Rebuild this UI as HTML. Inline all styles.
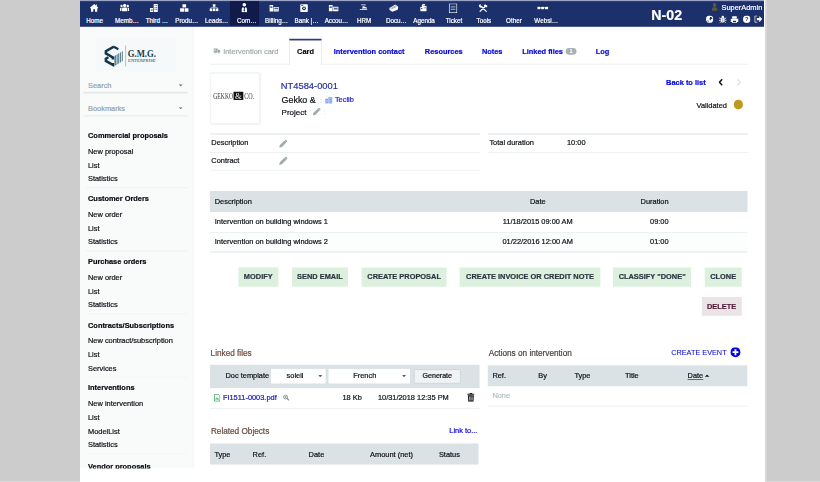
<!DOCTYPE html>
<html lang="en"><head><meta charset="utf-8"><title>Intervention - NT4584-0001</title>
<style>
html,body{margin:0;padding:0;}
body{width:820px;height:482px;overflow:hidden;background:#cccccc;position:relative;font-family:"Liberation Sans",sans-serif;color:#111;}
#white{position:absolute;left:80px;top:0;width:684.5px;height:482px;background:#fff;}
#edge{position:absolute;left:764.5px;top:0;width:2px;height:482px;background:#d7d7d7;}
#bot{position:absolute;left:0;top:481px;width:820px;height:1px;background:rgba(255,255,255,.25);}
#page{position:absolute;left:80px;top:0;width:1200px;height:846px;transform:scale(0.57);transform-origin:0 0;overflow:hidden;filter:blur(0.45px);}
.a{position:absolute;box-sizing:border-box;}
.t{white-space:nowrap;margin:0;padding:0;-webkit-text-stroke:0.35px currentColor;}
a{color:inherit;text-decoration:none;}
</style></head><body>
<div id="white"></div><div id="edge"></div>
<div id="page">
<div class="a " style="left:0px;top:46.67px;width:198.77px;height:774.91px;background:#f9fbfb;border-right:1.6px solid #e8eded;"></div>
<div class="a " style="left:0px;top:0px;width:1201.05px;height:46.84px;background:#1c316b;"></div>
<div class="a " style="left:0px;top:0px;width:1201.05px;height:1.58px;background:#9aa3c4;"></div>
<div class="a " style="left:262.63px;top:2.11px;width:51.58px;height:43.33px;background:#101a4b;"></div>
<svg class="a" style="left:16.84px;top:6.32px;width:15.61px;height:15.44px;" viewBox="0 0 20 18" preserveAspectRatio="none"><path fill="#fff" d="M10 1 L0.5 9 L2 10.5 L3 9.7 V17 H8 V12 H12 V17 H17 V9.7 L18 10.5 L19.5 9 L16 6 V2 H14 V4.3 Z"/></svg>
<div class="a t " style="top:29.47px;font-size:11px;line-height:14px;left:25.61px;transform:translateX(-50%);color:#fff;">Home</div>
<svg class="a" style="left:69.65px;top:6.49px;width:16.67px;height:14.74px;" viewBox="0 0 22 18" preserveAspectRatio="none"><circle cx="11" cy="4.5" r="3.6" fill="#fff"/><path fill="#fff" d="M5 17 V12 Q5 9 8 9 H14 Q17 9 17 12 V17 Z"/><circle cx="3.8" cy="5.5" r="2.6" fill="#fff"/><circle cx="18.2" cy="5.5" r="2.6" fill="#fff"/><path fill="#fff" d="M0 16 V12 Q0 9.5 2.5 9.5 H4.5 Q3.6 10.5 3.6 12 V16 Z M22 16 V12 Q22 9.5 19.5 9.5 H17.5 Q18.4 10.5 18.4 12 V16 Z"/></svg>
<div class="a t " style="top:29.47px;font-size:11px;line-height:14px;left:82.19px;transform:translateX(-50%);color:#fff;">Memb…</div>
<svg class="a" style="left:122.11px;top:6.84px;width:16.14px;height:14.39px;" viewBox="0 0 20 18" preserveAspectRatio="none"><path fill="#fff" d="M9 0 H18 V18 H9 Z M1 9 H7.5 V18 H1 Z"/><path fill="#1c316b" d="M11 2.5h2v2h-2z M14.5 2.5h2v2h-2z M11 6.5h2v2h-2z M14.5 6.5h2v2h-2z M11 10.5h2v2h-2z M14.5 10.5h2v2h-2z M2.8 11h1.4v1.6H2.8z M5 11h1.4v1.6H5z M2.8 14h1.4v1.6H2.8z M5 14h1.4v1.6H5z"/></svg>
<div class="a t " style="top:29.47px;font-size:11px;line-height:14px;left:134.74px;transform:translateX(-50%);color:#fff;">Third …</div>
<svg class="a" style="left:175.09px;top:7.02px;width:15.96px;height:14.21px;" viewBox="0 0 20 18" preserveAspectRatio="none"><path fill="#fff" d="M6 0.5 H14 V8 H6 Z M0.8 9.5 H9.3 V17.5 H0.8 Z M10.7 9.5 H19.2 V17.5 H10.7 Z"/></svg>
<div class="a t " style="top:29.47px;font-size:11px;line-height:14px;left:187.28px;transform:translateX(-50%);color:#fff;">Produ…</div>
<svg class="a" style="left:226.84px;top:6.67px;width:16.67px;height:12.98px;" viewBox="0 0 22 18" preserveAspectRatio="none"><path fill="#fff" d="M8 0.5 H14 V6.5 H8 Z M0.5 11 H6.5 V17.5 H0.5 Z M8 11 H14 V17.5 H8 Z M15.5 11 H21.5 V17.5 H15.5 Z"/><path stroke="#fff" stroke-width="1.2" fill="none" d="M11 6 V11.5 M3.5 11.5 V8.8 H18.5 V11.5"/></svg>
<div class="a t " style="top:29.47px;font-size:11px;line-height:14px;left:239.82px;transform:translateX(-50%);color:#fff;">Leads…</div>
<svg class="a" style="left:282.81px;top:4.74px;width:10.53px;height:17.02px;" viewBox="0 0 12 20" preserveAspectRatio="none"><circle cx="6" cy="4" r="3.6" fill="#fff"/><path fill="#fff" d="M0.5 19.5 V14 Q0.5 9 4 9 L6 12 L8 9 Q11.5 9 11.5 14 V19.5 Z"/><path fill="#1c316b" d="M5.2 10.5 H6.8 L7.4 16.5 L6 18.5 L4.6 16.5 Z"/></svg>
<div class="a t " style="top:29.47px;font-size:11px;line-height:14px;left:292.37px;transform:translateX(-50%);color:#fff;">Com…</div>
<svg class="a" style="left:331.58px;top:7.54px;width:17.19px;height:13.16px;" viewBox="0 0 20 16" preserveAspectRatio="none"><path fill="#fff" d="M0.5 1 H8 V15 H0.5 Z M9 5 H19.5 V15 H9 Z"/><path fill="#1c316b" d="M2 3h4.5v1.3H2z M2 6h4.5v1.3H2z M10.5 7h7.5v2.2h-7.5z M10.5 11h2v1.2h-2z M13.3 11h2v1.2h-2z M16 11h2v1.2h-2z"/></svg>
<div class="a t " style="top:29.47px;font-size:11px;line-height:14px;left:344.91px;transform:translateX(-50%);color:#fff;">Billing…</div>
<svg class="a" style="left:385.61px;top:7.19px;width:14.04px;height:14.39px;" viewBox="0 0 18 18" preserveAspectRatio="none"><rect x="0.5" y="0.5" width="17" height="17" rx="1.5" fill="#fff"/><circle cx="9" cy="9.5" r="4.2" fill="#1c316b"/><circle cx="9" cy="9.5" r="1.8" fill="#fff"/><rect x="2.5" y="2" width="5" height="1.6" fill="#1c316b"/></svg>
<div class="a t " style="top:29.47px;font-size:11px;line-height:14px;left:397.46px;transform:translateX(-50%);color:#fff;">Bank |…</div>
<svg class="a" style="left:436.14px;top:7.54px;width:17.89px;height:12.81px;" viewBox="0 0 20 16" preserveAspectRatio="none"><path fill="#fff" d="M0.5 1 H8 V15 H0.5 Z M9 5 H19.5 V15 H9 Z"/><path fill="#1c316b" d="M2 3h4.5v1.3H2z M2 6h4.5v1.3H2z M10.5 7h7.5v2.2h-7.5z M10.5 11h2v1.2h-2z M13.3 11h2v1.2h-2z M16 11h2v1.2h-2z"/></svg>
<div class="a t " style="top:29.47px;font-size:11px;line-height:14px;left:450px;transform:translateX(-50%);color:#fff;">Accou…</div>
<svg class="a" style="left:490px;top:7.19px;width:14.56px;height:11.4px;" viewBox="0 0 22 16" preserveAspectRatio="none"><path fill="#fff" d="M4 1 H16 L18 3.2 H6 Z M9 5.5 Q14 5 17 8 L20.5 9.5 V11 H7 Q9.5 8.5 9 5.5 Z M1 13 H21 V15 H1 Z"/></svg>
<div class="a t " style="top:29.47px;font-size:11px;line-height:14px;left:498.51px;transform:translateX(-50%);color:#fff;">HRM</div>
<svg class="a" style="left:542.11px;top:6.67px;width:17.37px;height:14.04px;" viewBox="0 0 22 18" preserveAspectRatio="none"><path fill="#fff" d="M1 9 L14 1 L21 6 L19.5 13 L7.5 17.5 L1.5 13.5 Z"/><path stroke="#1c316b" stroke-width="1" fill="none" d="M3.5 10 L15 3.6 M5.5 11.6 L17 5.2"/></svg>
<div class="a t " style="top:29.47px;font-size:11px;line-height:14px;left:555.09px;transform:translateX(-50%);color:#fff;">Docu…</div>
<svg class="a" style="left:596.14px;top:6.49px;width:12.98px;height:14.21px;" viewBox="0 0 18 18" preserveAspectRatio="none"><path fill="#fff" d="M8 0.5 L13 2 V6 H16.5 V17.5 H1.5 V8 H5 V4 Z"/><path fill="#1c316b" d="M9.5 3.5h2v2.3h-2z M3.5 10h3v2.6h-3z M10 9h2v2h-2z M13 9h2v2h-2z"/></svg>
<div class="a t " style="top:29.47px;font-size:11px;line-height:14px;left:603.6px;transform:translateX(-50%);color:#fff;">Agenda</div>
<svg class="a" style="left:647.37px;top:5.61px;width:14.91px;height:17.02px;" viewBox="0 0 16 20" preserveAspectRatio="none"><rect x="0.8" y="0.8" width="14.4" height="18.4" fill="none" stroke="#fff" stroke-width="1.5"/><path stroke="#fff" stroke-width="1.3" d="M3.6 7.2 H12.4 M3.6 12 H12.4"/></svg>
<div class="a t " style="top:29.47px;font-size:11px;line-height:14px;left:656.14px;transform:translateX(-50%);color:#fff;">Ticket</div>
<svg class="a" style="left:698.77px;top:7.19px;width:16.67px;height:14.56px;" viewBox="0 0 20 18" preserveAspectRatio="none"><path stroke="#fff" stroke-width="2.6" stroke-linecap="round" d="M5.5 5 L16.5 16 M14.5 5 L3.5 16"/><path fill="#fff" d="M0.5 3.2 L3.8 0.2 L5 1.6 L4.2 3 L6 4.8 L7.6 4.4 L8.4 5.4 L5.4 8.2 Q2 8.4 0.5 3.2 Z M11.2 2.6 L14.2 0.4 L19.6 4.6 L17.6 7.4 L15.6 5.8 L14 7 Z"/><circle cx="10" cy="10.2" r="1.1" fill="#1c316b"/></svg>
<div class="a t " style="top:29.47px;font-size:11px;line-height:14px;left:708.68px;transform:translateX(-50%);color:#fff;">Tools</div>
<div class="a t " style="top:29.47px;font-size:11px;line-height:14px;left:761.23px;transform:translateX(-50%);color:#fff;">Other</div>
<svg class="a" style="left:802.46px;top:10.7px;width:19.65px;height:6.14px;" viewBox="0 0 24 8" preserveAspectRatio="none"><rect x="0.5" y="1" width="6.6" height="6" rx="1.5" fill="#fff"/><rect x="8.7" y="1" width="6.6" height="6" rx="1.5" fill="#fff"/><rect x="16.9" y="1" width="6.6" height="6" rx="1.5" fill="#fff"/></svg>
<div class="a t " style="top:29.47px;font-size:11px;line-height:14px;left:817.81px;transform:translateX(-50%);color:#fff;">Websi…</div>
<div class="a t " style="top:11.36px;font-size:25px;line-height:30px;left:1002.28px;font-weight:bold;color:#fff;">N-02</div>
<svg class="a" style="left:1108.07px;top:4.56px;width:10.53px;height:14.21px;" viewBox="0 0 12 15" preserveAspectRatio="none"><circle cx="6" cy="4" r="3.6" fill="#555b39"/><path fill="#555b39" d="M0.5 15 V11.5 Q0.5 8 4 8 H8 Q11.5 8 11.5 11.5 V15 Z"/></svg>
<div class="a t " style="top:4.67px;font-size:13px;line-height:16px;right:2.98px;color:#fff;">SuperAdmin</div>
<svg class="a" style="left:1097.54px;top:27.19px;width:13.33px;height:13.33px;" viewBox="0 0 16 16" preserveAspectRatio="none"><circle cx="8" cy="8" r="7.6" fill="#fff"/><path fill="#1c316b" d="M9 3 Q13 3 14 7 L11 8 L9.5 11 L7.5 8 Z M3 10 L6 11.5 L5.5 14 Q3.5 13 3 10 Z"/></svg>
<svg class="a" style="left:1121.4px;top:26.84px;width:13.33px;height:14.04px;" viewBox="0 0 16 16" preserveAspectRatio="none"><ellipse cx="8" cy="9" rx="4" ry="5.6" fill="#fff"/><circle cx="8" cy="2.8" r="2.4" fill="#fff"/><path stroke="#fff" stroke-width="1.5" d="M0.5 5 L4.5 7 M15.5 5 L11.5 7 M0 10 H4 M16 10 H12 M1 15.5 L4.5 12.5 M15 15.5 L11.5 12.5"/><path stroke="#1c316b" stroke-width="1" d="M8 5 V14"/></svg>
<svg class="a" style="left:1141.4px;top:27.54px;width:14.39px;height:12.98px;" viewBox="0 0 16 14" preserveAspectRatio="none"><path fill="#fff" d="M3.5 0.5 H12.5 V5 H3.5 Z M0.5 5.5 H15.5 V11.5 H12.5 V13.5 H3.5 V11.5 H0.5 Z"/><path fill="#1c316b" d="M5 9 H11 V12 H5 Z"/></svg>
<svg class="a" style="left:1162.63px;top:27.02px;width:13.68px;height:13.68px;" viewBox="0 0 16 16" preserveAspectRatio="none"><circle cx="8" cy="8" r="7.8" fill="#fff"/><text x="8" y="12.3" font-size="12" font-weight="bold" text-anchor="middle" fill="#1c316b" font-family="Liberation Sans, sans-serif">?</text></svg>
<svg class="a" style="left:1182.81px;top:27.37px;width:14.04px;height:12.98px;" viewBox="0 0 16 14" preserveAspectRatio="none"><path fill="none" stroke="#fff" stroke-width="1.6" d="M6 1 H1 V13 H6"/><path fill="#fff" d="M5 4.8 H10 V1.2 L15.8 7 L10 12.8 V9.2 H5 Z"/></svg>
<div class="a " style="left:27.37px;top:67.54px;width:140.35px;height:58.25px;background:#f5f9fa;"></div>
<svg class="a" style="left:41.23px;top:78.07px;width:93.86px;height:41.23px;" viewBox="0 0 107 47" preserveAspectRatio="none">
<path fill="#5f8391" d="M22 23 L39 13 L39 33 L22 43 Z"/>
<path stroke="#f6f9fb" stroke-width="1.6" d="M27 18 V40 M32 15 V37 M36.4 13 V35"/>
<g fill="none" stroke="#14364a" stroke-width="5" stroke-linejoin="miter">
<path d="M21 4.5 L5 13.5 L5 18 L19 26 L19 30"/>
<path d="M10 25.5 L5 28.5 L5 33 L19 41 L19 37"/>
<path d="M21 4.5 L30 9.5" stroke-width="4.4"/>
</g>
<path d="M44.5 2 V44" stroke="#7fa3ad" stroke-width="1.2"/>
<text x="49" y="25" font-family="Liberation Serif, serif" font-weight="bold" font-size="20" fill="#16384a" textLength="56" lengthAdjust="spacingAndGlyphs">G.M.G.</text>
<text x="49.5" y="35" font-family="Liberation Serif, serif" font-size="8" fill="#16384a" textLength="55" lengthAdjust="spacingAndGlyphs">ENTERPRISE</text>
</svg>
<div class="a t " style="top:139.51px;font-size:13px;line-height:20px;left:14.04px;color:#97a3a6;">Search</div>
<div class="a t " style="top:179.69px;font-size:13px;line-height:20px;left:14.04px;color:#97a3a6;">Bookmarks</div>
<svg class="a" style="left:172.98px;top:148.25px;width:7.37px;height:3.86px;" viewBox="0 0 8 4" preserveAspectRatio="none"><path fill="#6d787b" d="M0 0 H8 L4 4 Z"/></svg>
<svg class="a" style="left:172.98px;top:188.25px;width:7.37px;height:3.86px;" viewBox="0 0 8 4" preserveAspectRatio="none"><path fill="#6d787b" d="M0 0 H8 L4 4 Z"/></svg>
<div class="a " style="left:6.14px;top:161.49px;width:182.46px;height:1.58px;background:#e3e9ea;box-shadow:0 1.5px 2px rgba(120,140,140,.14);"></div>
<div class="a " style="left:6.14px;top:201.67px;width:182.46px;height:1.58px;background:#e3e9ea;box-shadow:0 1.5px 2px rgba(120,140,140,.14);"></div>
<div class="a t " style="top:228.11px;font-size:13px;line-height:20px;left:14.04px;font-weight:bold;color:#070910;">Commercial proposals</div>
<div class="a t " style="top:256px;font-size:13px;line-height:20px;left:14.04px;color:#0e1015;">New proposal</div>
<div class="a t " style="top:279.86px;font-size:13px;line-height:20px;left:14.04px;color:#0e1015;">List</div>
<div class="a t " style="top:303.72px;font-size:13px;line-height:20px;left:14.04px;color:#0e1015;">Statistics</div>
<div class="a " style="left:10.53px;top:328.42px;width:178.07px;height:1.4px;background:#eef2f2;"></div>
<div class="a t " style="top:338.81px;font-size:13px;line-height:20px;left:14.04px;font-weight:bold;color:#070910;">Customer Orders</div>
<div class="a t " style="top:366.71px;font-size:13px;line-height:20px;left:14.04px;color:#0e1015;">New order</div>
<div class="a t " style="top:390.57px;font-size:13px;line-height:20px;left:14.04px;color:#0e1015;">List</div>
<div class="a t " style="top:414.43px;font-size:13px;line-height:20px;left:14.04px;color:#0e1015;">Statistics</div>
<div class="a " style="left:10.53px;top:439.12px;width:178.07px;height:1.4px;background:#eef2f2;"></div>
<div class="a t " style="top:449.69px;font-size:13px;line-height:20px;left:14.04px;font-weight:bold;color:#070910;">Purchase orders</div>
<div class="a t " style="top:477.58px;font-size:13px;line-height:20px;left:14.04px;color:#0e1015;">New order</div>
<div class="a t " style="top:501.44px;font-size:13px;line-height:20px;left:14.04px;color:#0e1015;">List</div>
<div class="a t " style="top:525.3px;font-size:13px;line-height:20px;left:14.04px;color:#0e1015;">Statistics</div>
<div class="a " style="left:10.53px;top:550px;width:178.07px;height:1.4px;background:#eef2f2;"></div>
<div class="a t " style="top:560.57px;font-size:13px;line-height:20px;left:14.04px;font-weight:bold;color:#070910;">Contracts/Subscriptions</div>
<div class="a t " style="top:588.46px;font-size:13px;line-height:20px;left:14.04px;color:#0e1015;">New contract/subscription</div>
<div class="a t " style="top:612.32px;font-size:13px;line-height:20px;left:14.04px;color:#0e1015;">List</div>
<div class="a t " style="top:636.18px;font-size:13px;line-height:20px;left:14.04px;color:#0e1015;">Services</div>
<div class="a " style="left:10.53px;top:660.88px;width:178.07px;height:1.4px;background:#eef2f2;"></div>
<div class="a t " style="top:671.44px;font-size:13px;line-height:20px;left:14.04px;font-weight:bold;color:#070910;">Interventions</div>
<div class="a t " style="top:699.34px;font-size:13px;line-height:20px;left:14.04px;color:#0e1015;">New intervention</div>
<div class="a t " style="top:723.2px;font-size:13px;line-height:20px;left:14.04px;color:#0e1015;">List</div>
<div class="a t " style="top:747.06px;font-size:13px;line-height:20px;left:14.04px;color:#0e1015;">ModelList</div>
<div class="a t " style="top:770.92px;font-size:13px;line-height:20px;left:14.04px;color:#0e1015;">Statistics</div>
<div class="a " style="left:10.53px;top:795.61px;width:178.07px;height:1.4px;background:#eef2f2;"></div>
<div class="a t " style="top:807.76px;font-size:13px;line-height:20px;left:14.04px;font-weight:bold;color:#070910;">Vendor proposals</div>
<div class="a " style="left:0px;top:821.58px;width:1201.05px;height:24.04px;background:#fff;"></div>
<div class="a " style="left:228.07px;top:111.58px;width:943.86px;height:1.75px;background:#dde4e5;"></div>
<div class="a " style="left:367.37px;top:67.72px;width:56.49px;height:45.96px;background:#fff;border:1px solid #d8dfe0;border-bottom:none;border-top:3.4px solid #2c3c78;"></div>
<svg class="a" style="left:234.39px;top:83.51px;width:12.63px;height:10.88px;" viewBox="0 0 16 14" preserveAspectRatio="none"><path fill="#9aa3a4" d="M0.5 1.5 H9.5 V11 H0.5 Z M10.3 4.5 H13.5 L15.5 7.5 V11 H10.3 Z"/><circle cx="4" cy="11.6" r="1.9" fill="#9aa3a4" stroke="#fff" stroke-width=".8"/><circle cx="12" cy="11.6" r="1.9" fill="#9aa3a4" stroke="#fff" stroke-width=".8"/><path fill="#fff" d="M2 3.5h3v1.2H2z M2 6h5v1.2H2z"/></svg>
<div class="a t " style="top:79.69px;font-size:13px;line-height:20px;left:251.23px;color:#a3abac;">Intervention card</div>
<div class="a t " style="top:79.86px;font-size:13px;line-height:20px;left:380.88px;font-weight:bold;color:#0c0f14;">Card</div>
<div class="a t " style="top:79.86px;font-size:13px;line-height:20px;left:445.09px;font-weight:bold;color:#0606dc;">Intervention contact</div>
<div class="a t " style="top:79.86px;font-size:13px;line-height:20px;left:604.91px;font-weight:bold;color:#0606dc;">Resources</div>
<div class="a t " style="top:79.86px;font-size:13px;line-height:20px;left:705.09px;font-weight:bold;color:#0606dc;">Notes</div>
<div class="a t " style="top:79.86px;font-size:13px;line-height:20px;left:775.79px;font-weight:bold;color:#0606dc;">Linked files</div>
<div class="a " style="left:852.28px;top:84.04px;width:18.6px;height:11.75px;background:#a9b2b2;border-radius:6px;"></div>
<div class="a t " style="top:84.12px;font-size:10px;line-height:12px;left:861.58px;transform:translateX(-50%);color:#fff;">1</div>
<div class="a t " style="top:79.86px;font-size:13px;line-height:20px;left:904.74px;font-weight:bold;color:#0606dc;">Log</div>
<div class="a " style="left:228.6px;top:128.07px;width:86.67px;height:88.6px;background:#fff;border:1.5px solid #e9eeef;box-shadow:0 0 3px rgba(150,170,170,.35);"></div>
<svg class="a" style="left:233.33px;top:157.89px;width:75.44px;height:21.05px;" viewBox="0 0 86 24" preserveAspectRatio="none">
<text x="1" y="17.6" font-family="Liberation Serif, serif" font-size="18.5" fill="#333" textLength="39.5" lengthAdjust="spacingAndGlyphs">GEKKO</text>
<rect x="41.5" y="3.4" width="19.5" height="16.4" fill="#111"/>
<text x="51.2" y="17.4" font-family="Liberation Serif, serif" font-size="17" fill="#fff" text-anchor="middle">&amp;</text>
<text x="63" y="17.6" font-family="Liberation Serif, serif" font-size="18.5" fill="#333" textLength="20" lengthAdjust="spacingAndGlyphs">CO.</text>
</svg>
<div class="a t " style="top:139.67px;font-size:16.4px;line-height:22px;left:352.28px;color:#2830a4;">NT4584-0001</div>
<div class="a t " style="top:164.2px;font-size:15.6px;line-height:22px;left:353.68px;color:#0e1015;">Gekko &amp;</div>
<div class="a t " style="top:168.32px;font-size:12px;line-height:16px;left:421.4px;color:#c9d0d1;">:</div>
<svg class="a" style="left:429.82px;top:170.18px;width:13.33px;height:11.58px;" viewBox="0 0 16 14" preserveAspectRatio="none"><path fill="#739de0" d="M0.5 4 H6 V14 H0.5 Z M7 0.5 H15.5 V14 H7 Z"/><path fill="#fff" d="M9 3h1.6v1.8H9z M12 3h1.6v1.8H12z M9 6.5h1.6v1.8H9z M12 6.5h1.6v1.8H12z M9 10h1.6v1.8H9z M12 10h1.6v1.8H12z M2 6.5h1.1v1.5H2z M3.8 6.5h1.1v1.5H3.8z M2 9.8h1.1v1.5H2z M3.8 9.8h1.1v1.5H3.8z"/></svg>
<div class="a t " style="top:165.3px;font-size:13px;line-height:20px;left:447.19px;color:#1418d2;">Teclib</div>
<div class="a t " style="top:185.03px;font-size:14px;line-height:22px;left:353.68px;color:#0e1015;">Project</div>
<svg class="a" style="left:408.07px;top:187.54px;width:15.09px;height:15.09px;" viewBox="0 0 16 16" preserveAspectRatio="none"><path fill="#9dabaa" d="M0.5 15.5 L1.5 11 L11 1.5 Q12 0.5 13 1.5 L14.5 3 Q15.5 4 14.5 5 L5 14.5 Z"/><path stroke="#fff" stroke-width="0.8" d="M10 2.8 L13.2 6"/></svg>
<div class="a t " style="top:188.15px;font-size:12px;line-height:16px;left:427.72px;color:#d3d9da;">:</div>
<div class="a t " style="top:134.6px;font-size:13px;line-height:20px;left:1028.25px;font-weight:bold;color:#0606dc;">Back to list</div>
<svg class="a" style="left:1120.35px;top:137.89px;width:8.07px;height:12.63px;" viewBox="0 0 8 12" preserveAspectRatio="none"><path fill="none" stroke="#111" stroke-width="2.6" d="M6.6 1 L1.8 6 L6.6 11"/></svg>
<svg class="a" style="left:1151.93px;top:137.89px;width:8.07px;height:12.63px;" viewBox="0 0 8 12" preserveAspectRatio="none"><path fill="none" stroke="#dfe6e7" stroke-width="2.6" d="M1.4 1 L6.2 6 L1.4 11"/></svg>
<div class="a t " style="top:175.48px;font-size:13px;line-height:20px;right:65.09px;color:#0e1015;">Validated</div>
<div class="a " style="left:1146.84px;top:175.26px;width:16.49px;height:16.49px;background:#bd9a21;border-radius:50%;"></div>
<div class="a " style="left:228.42px;top:234.47px;width:473.16px;height:1.58px;background:#e1e7e8;"></div>
<div class="a " style="left:228.42px;top:266.58px;width:473.16px;height:1.58px;background:#e1e7e8;"></div>
<div class="a " style="left:228.42px;top:297.81px;width:473.16px;height:1.58px;background:#e1e7e8;"></div>
<div class="a " style="left:716.32px;top:234.47px;width:455.61px;height:1.58px;background:#e1e7e8;"></div>
<div class="a " style="left:716.32px;top:266.58px;width:455.61px;height:1.58px;background:#e1e7e8;"></div>
<div class="a t " style="top:240.57px;font-size:13px;line-height:20px;left:230.35px;color:#0e1015;">Description</div>
<div class="a t " style="top:272.14px;font-size:13px;line-height:20px;left:230.35px;color:#0e1015;">Contract</div>
<svg class="a" style="left:348.6px;top:243.86px;width:15.61px;height:15.61px;" viewBox="0 0 16 16" preserveAspectRatio="none"><path fill="#9dabaa" d="M0.5 15.5 L1.5 11 L11 1.5 Q12 0.5 13 1.5 L14.5 3 Q15.5 4 14.5 5 L5 14.5 Z"/><path stroke="#fff" stroke-width="0.8" d="M10 2.8 L13.2 6"/></svg>
<svg class="a" style="left:348.6px;top:274.21px;width:15.96px;height:15.79px;" viewBox="0 0 16 16" preserveAspectRatio="none"><path fill="#9dabaa" d="M0.5 15.5 L1.5 11 L11 1.5 Q12 0.5 13 1.5 L14.5 3 Q15.5 4 14.5 5 L5 14.5 Z"/><path stroke="#fff" stroke-width="0.8" d="M10 2.8 L13.2 6"/></svg>
<div class="a t " style="top:240.57px;font-size:13px;line-height:20px;left:718.25px;color:#0e1015;">Total duration</div>
<div class="a t " style="top:240.57px;font-size:13px;line-height:20px;left:854.39px;color:#0e1015;">10:00</div>
<div class="a " style="left:227.89px;top:335.09px;width:943.51px;height:36.67px;background:#dbe2e5;"></div>
<div class="a t " style="top:343.55px;font-size:13px;line-height:20px;left:236.32px;color:#0e1015;">Description</div>
<div class="a t " style="top:343.55px;font-size:13px;line-height:20px;left:803.16px;transform:translateX(-50%);color:#0e1015;">Date</div>
<div class="a t " style="top:343.55px;font-size:13px;line-height:20px;right:167.37px;color:#0e1015;">Duration</div>
<div class="a " style="left:227.89px;top:408.07px;width:943.51px;height:33.33px;background:#fcfdfd;"></div>
<div class="a " style="left:227.89px;top:406.67px;width:943.51px;height:1.58px;background:#e1e7e8;"></div>
<div class="a " style="left:227.89px;top:441.4px;width:943.51px;height:1.58px;background:#e1e7e8;"></div>
<div class="a t " style="top:379.34px;font-size:13px;line-height:20px;left:236.32px;color:#0e1015;">Intervention on building windows 1</div>
<div class="a t " style="top:413.9px;font-size:13px;line-height:20px;left:236.32px;color:#0e1015;">Intervention on building windows 2</div>
<div class="a t " style="top:379.34px;font-size:13px;line-height:20px;left:802.98px;transform:translateX(-50%);color:#0e1015;">11/18/2015 09:00 AM</div>
<div class="a t " style="top:413.9px;font-size:13px;line-height:20px;left:802.98px;transform:translateX(-50%);color:#0e1015;">01/22/2016 12:00 AM</div>
<div class="a t " style="top:379.34px;font-size:13px;line-height:20px;right:167.37px;color:#0e1015;">09:00</div>
<div class="a t " style="top:413.9px;font-size:13px;line-height:20px;right:167.37px;color:#0e1015;">01:00</div>
<div class="a " style="left:277.54px;top:469.3px;width:70.35px;height:33.68px;background:#dcf0de;"></div>
<div class="a t " style="top:476.35px;font-size:13px;line-height:20px;left:312.72px;transform:translateX(-50%);font-weight:bold;color:#2b3440;">MODIFY</div>
<div class="a " style="left:371.93px;top:469.3px;width:98.07px;height:33.68px;background:#dcf0de;"></div>
<div class="a t " style="top:476.35px;font-size:13px;line-height:20px;left:420.96px;transform:translateX(-50%);font-weight:bold;color:#2b3440;">SEND EMAIL</div>
<div class="a " style="left:494.21px;top:469.3px;width:148.95px;height:33.68px;background:#dcf0de;"></div>
<div class="a t " style="top:476.35px;font-size:13px;line-height:20px;left:568.68px;transform:translateX(-50%);font-weight:bold;color:#2b3440;">CREATE PROPOSAL</div>
<div class="a " style="left:666.32px;top:469.3px;width:246.32px;height:33.68px;background:#dcf0de;"></div>
<div class="a t " style="top:476.35px;font-size:13px;line-height:20px;left:789.47px;transform:translateX(-50%);font-weight:bold;color:#2b3440;">CREATE INVOICE OR CREDIT NOTE</div>
<div class="a " style="left:935.26px;top:469.3px;width:137.02px;height:33.68px;background:#dcf0de;"></div>
<div class="a t " style="top:476.35px;font-size:13px;line-height:20px;left:1003.77px;transform:translateX(-50%);font-weight:bold;color:#2b3440;">CLASSIFY "DONE"</div>
<div class="a " style="left:1096.14px;top:469.3px;width:64.39px;height:33.68px;background:#dcf0de;"></div>
<div class="a t " style="top:476.35px;font-size:13px;line-height:20px;left:1128.33px;transform:translateX(-50%);font-weight:bold;color:#2b3440;">CLONE</div>
<div class="a " style="left:1090.7px;top:521.05px;width:69.82px;height:32.98px;background:#eae4e6;"></div>
<div class="a t " style="top:527.76px;font-size:13px;line-height:20px;left:1125.61px;transform:translateX(-50%);font-weight:bold;color:#4f1a36;">DELETE</div>
<div class="a t " style="top:609.73px;font-size:14.4px;line-height:20px;left:229.12px;color:#6b4b3c;">Linked files</div>
<div class="a " style="left:227.72px;top:640px;width:472.81px;height:40.53px;background:#dbe2e5;"></div>
<div class="a t " style="top:649.86px;font-size:13px;line-height:20px;left:255.26px;color:#0e1015;">Doc template</div>
<div class="a " style="left:335.44px;top:646.67px;width:95.09px;height:26.32px;background:#fff;"></div>
<div class="a t " style="top:649.86px;font-size:13px;line-height:20px;left:362.46px;color:#0e1015;">soleil</div>
<div class="a " style="left:435.79px;top:646.67px;width:143.51px;height:26.32px;background:#fff;"></div>
<div class="a t " style="top:649.86px;font-size:13px;line-height:20px;left:479.3px;color:#0e1015;">French</div>
<svg class="a" style="left:417.89px;top:658.25px;width:7.02px;height:3.86px;" viewBox="0 0 8 4" preserveAspectRatio="none"><path fill="#555e60" d="M0 0 H8 L4 4 Z"/></svg>
<svg class="a" style="left:565.26px;top:658.25px;width:7.02px;height:3.86px;" viewBox="0 0 8 4" preserveAspectRatio="none"><path fill="#555e60" d="M0 0 H8 L4 4 Z"/></svg>
<div class="a " style="left:585.61px;top:648.07px;width:81.93px;height:24.56px;background:#f0f3f3;border:1.5px solid #c2c9cb;border-radius:2px;"></div>
<div class="a t " style="top:650.37px;font-size:12.4px;line-height:20px;left:626.84px;transform:translateX(-50%);color:#0e1015;">Generate</div>
<svg class="a" style="left:234.91px;top:690.88px;width:11.4px;height:13.68px;" viewBox="0 0 13 16" preserveAspectRatio="none"><path fill="#fff" stroke="#35a35a" stroke-width="1.6" d="M1 1 H8.5 L12 4.5 V15 H1 Z"/><path fill="none" stroke="#35a35a" stroke-width="1.3" d="M3.5 11.5 Q6.5 5 6.5 8 Q6.5 11 9.5 11 Q5 10.5 3.5 11.5"/></svg>
<div class="a t " style="top:687.93px;font-size:13px;line-height:20px;left:250.7px;color:#1616c4;">FI1511-0003.pdf</div>
<svg class="a" style="left:356.14px;top:691.93px;width:11.58px;height:11.23px;" viewBox="0 0 14 14" preserveAspectRatio="none"><circle cx="5.6" cy="5.6" r="4.2" fill="none" stroke="#76868a" stroke-width="1.8"/><path stroke="#76868a" stroke-width="2.4" d="M8.8 8.8 L13 13"/><path stroke="#76868a" stroke-width="1.2" d="M3.4 5.6 H7.8 M5.6 3.4 V7.8"/></svg>
<div class="a t " style="top:687.76px;font-size:13px;line-height:20px;left:460.53px;color:#0e1015;">18 Kb</div>
<div class="a t " style="top:687.76px;font-size:13px;line-height:20px;left:522.63px;color:#0e1015;">10/31/2018 12:35 PM</div>
<svg class="a" style="left:678.77px;top:689.3px;width:13.51px;height:16.14px;" viewBox="0 0 14 16" preserveAspectRatio="none"><path fill="#1c1c1c" d="M5 0.5 H9 L9.6 1.8 H13.5 V3.6 H0.5 V1.8 H4.4 Z M1.5 4.6 H12.5 L11.8 15.5 H2.2 Z"/><path stroke="#fff" stroke-width="1.1" d="M4.6 6.5 V13.5 M7 6.5 V13.5 M9.4 6.5 V13.5"/></svg>
<div class="a " style="left:227.72px;top:715.61px;width:472.81px;height:1.58px;background:#e1e7e8;"></div>
<div class="a t " style="top:747.1px;font-size:14.4px;line-height:20px;left:229.65px;color:#6b4b3c;">Related Objects</div>
<div class="a t " style="top:746.18px;font-size:13px;line-height:20px;right:502.98px;color:#0606dc;">Link to...</div>
<div class="a " style="left:227.72px;top:777.89px;width:471.58px;height:37.54px;background:#dbe2e5;"></div>
<div class="a t " style="top:786.88px;font-size:13px;line-height:20px;left:235.79px;color:#0e1015;">Type</div>
<div class="a t " style="top:786.88px;font-size:13px;line-height:20px;left:302.81px;color:#0e1015;">Ref.</div>
<div class="a t " style="top:786.88px;font-size:13px;line-height:20px;left:401.05px;color:#0e1015;">Date</div>
<div class="a t " style="top:786.88px;font-size:13px;line-height:20px;left:508.95px;color:#0e1015;">Amount (net)</div>
<div class="a t " style="top:786.88px;font-size:13px;line-height:20px;left:629.65px;color:#0e1015;">Status</div>
<div class="a t " style="top:609.91px;font-size:14.4px;line-height:20px;left:717.19px;color:#4b4340;">Actions on intervention</div>
<div class="a t " style="top:608.28px;font-size:12.8px;line-height:20px;right:65.61px;color:#0606dc;-webkit-text-stroke:0.1px currentColor;">CREATE EVENT</div>
<svg class="a" style="left:1141.05px;top:609.12px;width:17.89px;height:17.89px;" viewBox="0 0 16 16" preserveAspectRatio="none"><circle cx="8" cy="8" r="8" fill="#0606dc"/><path stroke="#fff" stroke-width="2.8" d="M8 3.4 V12.6 M3.4 8 H12.6"/></svg>
<div class="a " style="left:715.44px;top:640.7px;width:455.96px;height:36.84px;background:#dbe2e5;"></div>
<div class="a t " style="top:649.69px;font-size:13px;line-height:20px;left:723.51px;color:#0e1015;">Ref.</div>
<div class="a t " style="top:649.69px;font-size:13px;line-height:20px;left:804.04px;color:#0e1015;">By</div>
<div class="a t " style="top:649.69px;font-size:13px;line-height:20px;left:867.37px;color:#0e1015;">Type</div>
<div class="a t " style="top:649.69px;font-size:13px;line-height:20px;left:956.14px;color:#0e1015;">Title</div>
<div class="a t " style="top:649.69px;font-size:13px;line-height:20px;left:1065.96px;color:#0e1015;text-decoration:underline;">Date</div>
<svg class="a" style="left:1096.49px;top:656.84px;width:8.42px;height:4.56px;" viewBox="0 0 8 4" preserveAspectRatio="none"><path fill="#111" d="M0 4 H8 L4 0 Z"/></svg>
<div class="a t " style="top:684.43px;font-size:13px;line-height:20px;left:723.51px;color:#b3bfc0;">None</div>
<div class="a " style="left:715.44px;top:711.75px;width:455.96px;height:1.58px;background:#e1e7e8;"></div>
</div>
<div id="bot"></div>
</body></html>
